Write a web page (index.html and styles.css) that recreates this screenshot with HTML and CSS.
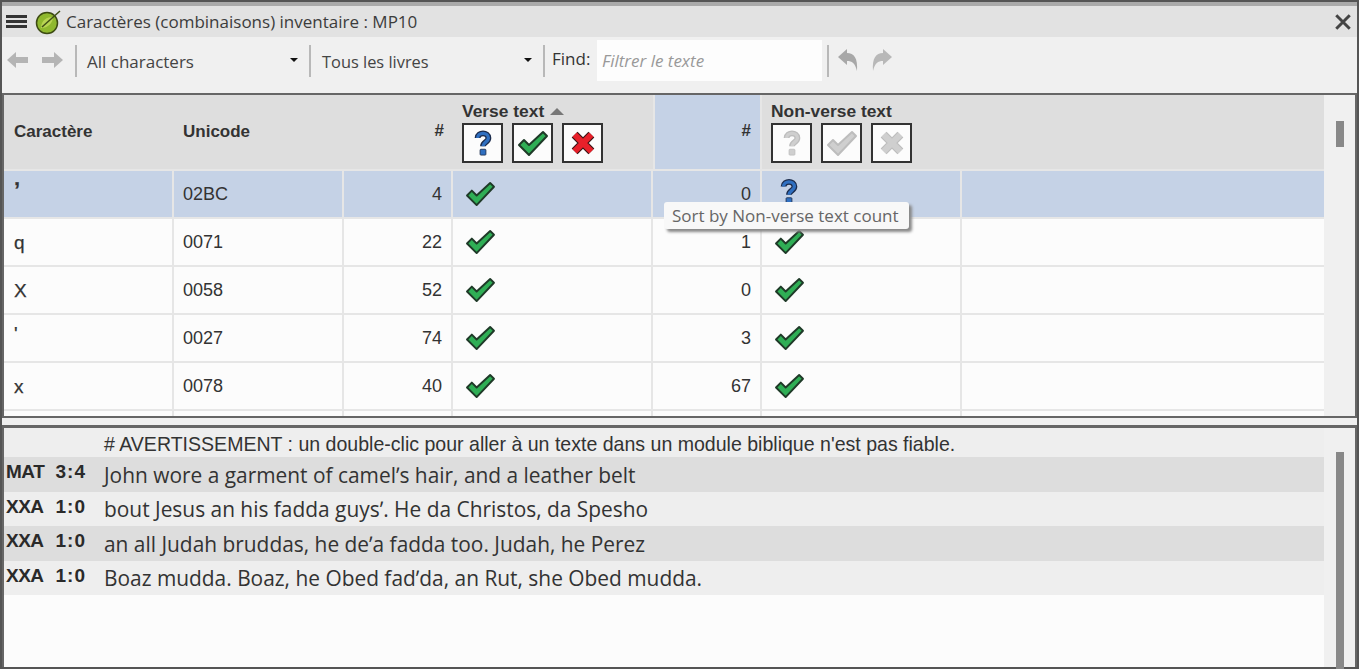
FILE: index.html
```html
<!DOCTYPE html>
<html>
	<head>
		<meta charset="UTF-8">
		<title>Caractères (combinaisons) inventaire : MP10</title>
		<link rel="stylesheet" href="styles.css">
	</head>
	<body>
		<svg class="defs" width="0" height="0">
			<symbol id="check" viewBox="0 0 32 27">
				<path d="M2 15 L7 10 L12 15 L26 2 L30 6 L12 25 Z" fill="var(--fill)" stroke="var(--edge)" stroke-width="2" stroke-linejoin="round"/>
			</symbol>
			<symbol id="quest" viewBox="0 0 24 32">
				<path d="M5.500 10 C5.500 2.500 18.500 2.500 18.500 10 C18.500 15 12 15 12 20" fill="none" stroke="var(--edge)" stroke-width="7"/>
				<path d="M5.500 10 C5.500 2.500 18.500 2.500 18.500 10 C18.500 15 12 15 12 20" fill="none" stroke="var(--fill)" stroke-width="4"/>
				<rect x="8.500" y="23.500" width="7" height="7" rx="1" fill="var(--fill)" stroke="var(--edge)"/>
			</symbol>
			<symbol id="cross" viewBox="0 0 28 28">
				<path d="M5 5 L23 23 M23 5 L5 23" stroke="var(--edge)" stroke-width="9"/>
				<path d="M5 5 L23 23 M23 5 L5 23" stroke="var(--fill)" stroke-width="6.500"/>
			</symbol>
		</svg>
		<div class="window">
			<div class="titlebar">
				<div class="burger"><span></span><span></span><span></span></div>
				<svg class="logo" viewBox="0 0 26 26">
					<circle cx="12" cy="14" r="10.500" fill="#8fb82e" stroke="#3c4a12" stroke-width="1.500"/>
					<path d="M6 19 C6 11 12 8 18 8 C18 14 13 19 6 19 Z" fill="#b8d452"/>
					<path d="M7 18 L25 2" stroke="#3f4f16" stroke-width="1.500"/>
				</svg>
				<span class="title">Caractères (combinaisons) inventaire : MP10</span>
				<svg class="close" viewBox="0 0 16 16">
					<path d="M2 2 L14 14 M14 2 L2 14" stroke="#444" stroke-width="2.600"/>
				</svg>
			</div>
			<div class="toolbar">
				<svg class="nav" viewBox="0 0 22 18"><path d="M0 9 L9 1 L9 6 L21 6 L21 12 L9 12 L9 17 Z" fill="#b4b4b4"/></svg>
				<svg class="nav nav-next" viewBox="0 0 22 18"><path d="M22 9 L13 1 L13 6 L1 6 L1 12 L13 12 L13 17 Z" fill="#b4b4b4"/></svg>
				<i class="sep sep-first"></i>
				<div class="combo combo-chars">All characters<b></b></div>
				<i class="sep"></i>
				<div class="combo combo-books">Tous les livres<b></b></div>
				<i class="sep"></i>
				<label class="find">Find:</label>
				<div class="filter">Filtrer le texte</div>
				<i class="sep"></i>
				<svg class="hist" viewBox="0 0 22 24"><path d="M1 9 L10 1 L10 5 C17 5 21 10 20 23 C18 15 15 13 10 13 L10 17 Z" fill="#a8a8a8"/></svg>
				<svg class="hist hist-redo" viewBox="0 0 22 24"><path d="M21 9 L12 1 L12 5 C5 5 1 10 2 23 C4 15 7 13 12 13 L12 17 Z" fill="#b8b8b8"/></svg>
			</div>
			<div class="pane pane-top">
				<div class="pane-body">
					<table class="grid">
						<colgroup>
							<col class="c-char"><col class="c-code"><col class="c-num"><col class="c-stat"><col class="c-num"><col class="c-stat"><col>
						</colgroup>
						<thead>
							<tr>
								<th>Caractère</th>
								<th>Unicode</th>
								<th class="num">#</th>
								<th class="stat">
									<div class="stat-name">Verse text <em class="sort"></em></div>
									<div class="stat-btns">
										<span class="btn"><svg class="i-quest"><use href="#quest"/></svg></span>
										<span class="btn"><svg class="i-check"><use href="#check"/></svg></span>
										<span class="btn"><svg class="i-cross"><use href="#cross"/></svg></span>
									</div>
								</th>
								<th class="num sorted">#</th>
								<th class="stat">
									<div class="stat-name">Non-verse text</div>
									<div class="stat-btns off">
										<span class="btn"><svg class="i-quest"><use href="#quest"/></svg></span>
										<span class="btn"><svg class="i-check"><use href="#check"/></svg></span>
										<span class="btn"><svg class="i-cross"><use href="#cross"/></svg></span>
									</div>
								</th>
								<th></th>
							</tr>
						</thead>
						<tbody>
							<tr class="sel">
								<td class="ch ch-mod">ʼ</td><td>02BC</td><td class="num">4</td>
								<td><svg class="i-check"><use href="#check"/></svg></td>
								<td class="num">0</td>
								<td><svg class="i-quest i-small"><use href="#quest"/></svg></td><td></td>
							</tr>
							<tr>
								<td class="ch">q</td><td>0071</td><td class="num">22</td>
								<td><svg class="i-check"><use href="#check"/></svg></td>
								<td class="num">1</td>
								<td><svg class="i-check"><use href="#check"/></svg></td><td></td>
							</tr>
							<tr>
								<td class="ch">X</td><td>0058</td><td class="num">52</td>
								<td><svg class="i-check"><use href="#check"/></svg></td>
								<td class="num">0</td>
								<td><svg class="i-check"><use href="#check"/></svg></td><td></td>
							</tr>
							<tr>
								<td class="ch ch-top">'</td><td>0027</td><td class="num">74</td>
								<td><svg class="i-check"><use href="#check"/></svg></td>
								<td class="num">3</td>
								<td><svg class="i-check"><use href="#check"/></svg></td><td></td>
							</tr>
							<tr>
								<td class="ch">x</td><td>0078</td><td class="num">40</td>
								<td><svg class="i-check"><use href="#check"/></svg></td>
								<td class="num">67</td>
								<td><svg class="i-check"><use href="#check"/></svg></td><td></td>
							</tr>
							<tr>
								<td></td><td></td><td></td><td></td><td></td><td></td><td></td>
							</tr>
						</tbody>
					</table>
					<div class="tooltip">Sort by Non-verse text count</div>
				</div>
				<div class="scroll scroll-top"><div class="thumb"></div></div>
			</div>
			<div class="pane pane-bottom">
				<div class="pane-body">
					<div class="warn"># AVERTISSEMENT : un double-clic pour aller à un texte dans un module biblique n'est pas fiable.</div>
					<div class="verse"><span class="ref"><span class="bk">MAT</span><span class="cv">3:4</span></span><span class="txt">John wore a garment of camelʼs hair, and a leather belt</span></div>
					<div class="verse"><span class="ref"><span class="bk">XXA</span><span class="cv">1:0</span></span><span class="txt">bout Jesus an his fadda guysʼ. He da Christos, da Spesho</span></div>
					<div class="verse"><span class="ref"><span class="bk">XXA</span><span class="cv">1:0</span></span><span class="txt">an all Judah bruddas, he deʼa fadda too. Judah, he Perez</span></div>
					<div class="verse"><span class="ref"><span class="bk">XXA</span><span class="cv">1:0</span></span><span class="txt">Boaz mudda. Boaz, he Obed fadʼda, an Rut, she Obed mudda.</span></div>
				</div>
				<div class="scroll scroll-bottom"><div class="thumb"></div></div>
			</div>
		</div>
	</body>
</html>
```

FILE: styles.css
```css
html,body{
	margin: 0;
	padding: 0;
}
body{
	font-family: "Liberation Sans", sans-serif;
	color: #333;
	overflow: hidden;
}
.defs{
	position: absolute;
}
.window{
	width: 1359px;
	height: 669px;
	box-sizing: border-box;
	display: flex;
	flex-direction: column;
	background: #f0f0f0;
	border: 2px solid #555;
}
.titlebar{
	height: 31px;
	flex: none;
	display: flex;
	align-items: center;
	background: #e2e2e2;
	border-top: 4px solid #aaa;
	font-family: "Open Sans", sans-serif;
	font-size: 17px;
	color: #3c3c3c;
}
.burger{
	width: 21px;
	margin-left: 4px;
}
.burger span{
	display: block;
	height: 3px;
	margin: 2px 0;
	background: #333;
}
.logo{
	width: 26px;
	height: 26px;
	margin-left: 8px;
}
.title{
	margin-left: 5px;
}
.close{
	width: 18px;
	height: 18px;
	margin-left: auto;
	margin-right: 5px;
}
.toolbar{
	height: 56px;
	flex: none;
	box-sizing: border-box;
	display: flex;
	align-items: center;
	padding-bottom: 10px;
	font-family: "Open Sans", sans-serif;
	font-size: 17px;
}
.nav{
	width: 22px;
	height: 18px;
	margin-left: 5px;
}
.nav-next{
	margin-left: 12px;
}
.sep{
	width: 2px;
	height: 32px;
	margin-top: 2px;
	background: #b8b8b8;
	flex: none;
}
.sep-first{
	margin-left: 12px;
}
.combo{
	display: flex;
	align-items: center;
	padding-left: 10px;
	padding-top: 2px;
	box-sizing: border-box;
	color: #444;
}
.combo b{
	width: 0;
	height: 0;
	margin-left: auto;
	margin-right: 11px;
	margin-bottom: 2px;
	border-left: 4px solid transparent;
	border-right: 4px solid transparent;
	border-top: 4px solid #111;
}
.combo-chars{
	width: 232px;
}
.combo-books{
	width: 232px;
	padding-left: 11px;
	font-size: 16.400px;
}
.find{
	margin-left: 7px;
	width: 45px;
	color: #333;
	margin-top: -4px;
}
.filter{
	width: 225px;
	height: 41px;
	line-height: 41px;
	box-sizing: border-box;
	padding-left: 5px;
	margin-right: 5px;
	background: #fdfdfd;
	color: #999;
	font-style: italic;
}
.hist{
	width: 22px;
	height: 24px;
	margin-left: 8px;
}
.hist-redo{
	margin-left: 12px;
}
.pane{
	display: flex;
	box-sizing: border-box;
	border: 2px solid #666;
	background: #f0f0f0;
}
.pane-top{
	height: 325px;
	flex: none;
}
.pane-bottom{
	flex: 1;
	margin-top: 7px;
	min-height: 0;
	border-bottom: 0;
	border-top-width: 3px;
}
.pane-body{
	width: 1320px;
	flex: none;
	position: relative;
	overflow: hidden;
	background: #fcfcfc;
}
.scroll{
	flex: 1;
	margin-left: 2px;
}
.thumb{
	width: 8px;
	margin-left: 10px;
	background: #888;
}
.scroll-top .thumb{
	height: 26px;
	margin-top: 26px;
}
.scroll-bottom .thumb{
	height: 220px;
	margin-top: 24px;
}
.grid{
	width: 1320px;
	table-layout: fixed;
	border-collapse: separate;
	border-spacing: 0;
	font-size: 18px;
}
.c-char{
	width: 170px;
}
.c-code{
	width: 170px;
}
.c-num{
	width: 109px;
}
.c-stat{
	width: 200px;
}
th{
	height: 76px;
	box-sizing: border-box;
	background: #dedede;
	padding: 0 0 0 9px;
	text-align: left;
	font-size: 17px;
	vertical-align: middle;
	border-bottom: 2px solid #e6e6e6;
}
th:first-child{
	padding-left: 10px;
}
td{
	height: 48px;
	box-sizing: border-box;
	padding: 0 0 0 9px;
	border-right: 2px solid #e6e6e6;
	border-bottom: 2px solid #e6e6e6;
	background: #fcfcfc;
}
td:last-child{
	border-right: 0;
}
.sel td{
	background: #c5d2e6;
}
th.num,td.num{
	text-align: right;
	padding: 0 9px 0 0;
}
th.num{
	padding-bottom: 3px;
}
.sorted{
	background: #c5d2e6;
	border-left: 2px solid #e6e6e6;
	border-right: 2px solid #e6e6e6;
}
.ch{
	padding-left: 10px;
	font-size: 19px;
	padding-top: 2px;
	-webkit-text-stroke: 0.25px #333;
}
.ch-top{
	padding-bottom: 10px;
}
.ch-mod{
	font-size: 22px;
	font-weight: bold;
	padding-bottom: 8px;
}
th.stat{
	vertical-align: top;
	padding-top: 7px;
}
.stat-name{
	height: 21px;
	line-height: 18px;
	font-size: 17.400px;
}
.sort{
	display: inline-block;
	width: 0;
	height: 0;
	margin-left: 1px;
	vertical-align: 2px;
	border-left: 7px solid transparent;
	border-right: 7px solid transparent;
	border-bottom: 7px solid #777;
}
.stat-btns{
	display: flex;
	gap: 9px;
}
.btn{
	width: 41px;
	height: 40px;
	box-sizing: border-box;
	border: 2px solid #333;
	background: #fcfcfc;
	display: flex;
	align-items: center;
	justify-content: center;
}
.i-check{
	--fill: #2fae55;
	--edge: #1f3a28;
	width: 31px;
	height: 26px;
	display: block;
	margin-left: 3px;
	margin-bottom: 1px;
}
.btn .i-check{
	margin: 0;
	width: 32px;
	height: 27px;
}
.i-quest{
	--fill: #2f6fc0;
	--edge: #1c2c4c;
	width: 20px;
	height: 28px;
	display: block;
}
.i-small{
	margin-left: 8px;
	margin-bottom: 5px;
	width: 20px;
	height: 27px;
}
.i-cross{
	--fill: #e8202a;
	--edge: #3a1414;
	width: 26px;
	height: 26px;
	display: block;
}
.off .i-quest,.off .i-check,.off .i-cross{
	--fill: #cfcfcf;
	--edge: #bdbdbd;
}
.tooltip{
	position: absolute;
	left: 660px;
	top: 107px;
	width: 245px;
	height: 27px;
	box-sizing: border-box;
	padding-left: 8px;
	line-height: 27px;
	background: #f8f8f8;
	border-radius: 3px;
	box-shadow: 3px 3px 3px #888;
	font-family: "Open Sans", sans-serif;
	font-size: 17px;
	color: #666;
	white-space: nowrap;
}
.warn{
	height: 29px;
	line-height: 32px;
	padding-left: 100px;
	background: #eee;
	font-size: 19.560px;
}
.verse{
	height: 34.500px;
	display: flex;
	align-items: center;
	background: #eee;
}
.verse:nth-child(even){
	background: #ddd;
}
.ref{
	width: 100px;
	flex: none;
	box-sizing: border-box;
	padding-left: 2px;
	padding-right: 18px;
	display: flex;
	justify-content: space-between;
	font-weight: bold;
	font-size: 19px;
	color: #2a2a2a;
	margin-top: -4px;
}
.bk{
	letter-spacing: -0.500px;
}
.cv{
	letter-spacing: 1px;
}
.txt{
	font-family: "Open Sans", sans-serif;
	font-size: 20.900px;
	color: #333;
	padding-top: 1px;
}
```
